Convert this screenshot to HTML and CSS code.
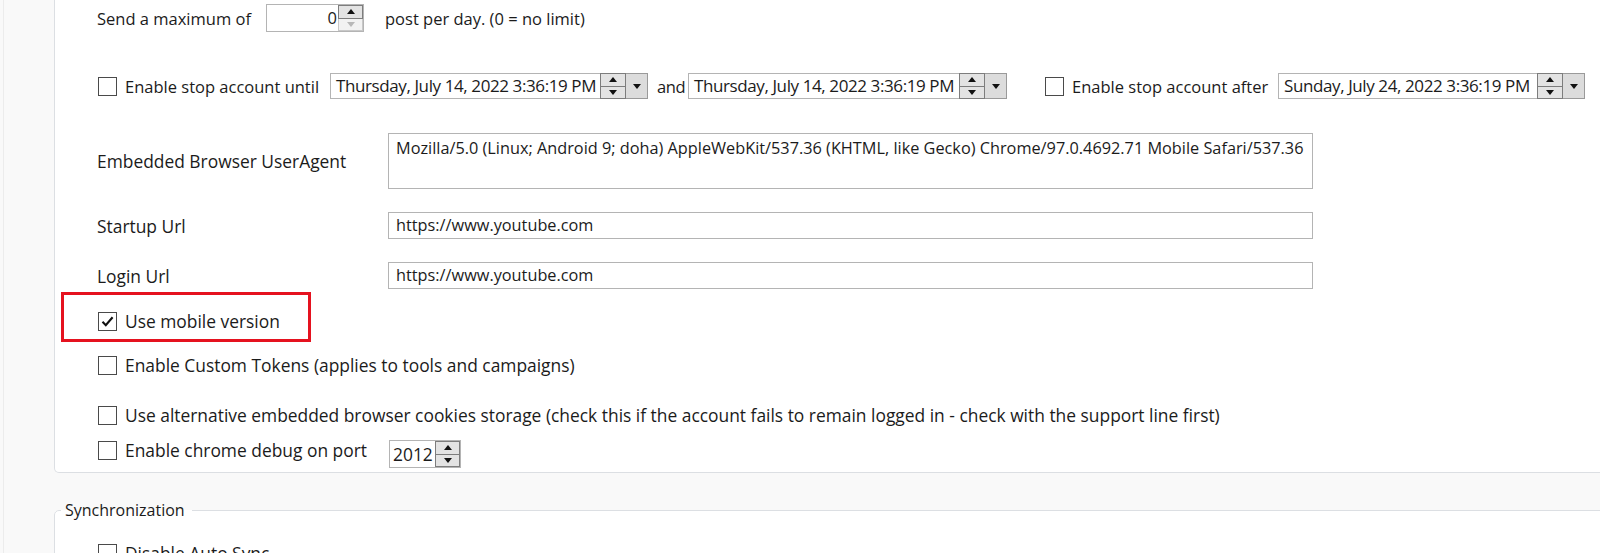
FILE: index.html
```html
<!DOCTYPE html>
<html lang="en">
<head>
    <meta charset="UTF-8">
    <meta name="viewport" content="width=device-width, initial-scale=1.0">
    <title>Account Settings</title>
    <link rel="stylesheet" href="styles.css">
</head>
<body>
    <div class="page">
        <div class="group">
            <div class="row row-max">
                <span class="label-max">Send a maximum of</span>
                <div class="num num-max">
                    <span class="num-value right">0</span>
                    <div class="spin">
                        <span class="spin-btn"><i class="arr-up"></i></span>
                        <span class="spin-btn off"><i class="arr-down"></i></span>
                    </div>
                </div>
                <span class="after-max">post per day. (0 = no limit)</span>
            </div>

            <div class="row row-stop">
                <span class="check"></span>
                <span class="check-text stop-until">Enable stop account until</span>
                <div class="picker picker-a">
                    <span class="picker-text">Thursday, July 14, 2022 3:36:19 PM</span>
                    <div class="spin">
                        <span class="spin-btn"><i class="arr-up"></i></span>
                        <span class="spin-btn"><i class="arr-down"></i></span>
                    </div>
                    <span class="drop"><i class="arr-down"></i></span>
                </div>
                <span class="and">and</span>
                <div class="picker picker-b">
                    <span class="picker-text">Thursday, July 14, 2022 3:36:19 PM</span>
                    <div class="spin">
                        <span class="spin-btn"><i class="arr-up"></i></span>
                        <span class="spin-btn"><i class="arr-down"></i></span>
                    </div>
                    <span class="drop"><i class="arr-down"></i></span>
                </div>
                <span class="check check-after"></span>
                <span class="check-text stop-after">Enable stop account after</span>
                <div class="picker picker-c">
                    <span class="picker-text">Sunday, July 24, 2022 3:36:19 PM</span>
                    <div class="spin">
                        <span class="spin-btn"><i class="arr-up"></i></span>
                        <span class="spin-btn"><i class="arr-down"></i></span>
                    </div>
                    <span class="drop"><i class="arr-down"></i></span>
                </div>
            </div>

            <div class="lower">
                <div class="row row-ua">
                    <span class="field-label">Embedded Browser UserAgent</span>
                    <div class="textbox textarea">Mozilla/5.0 (Linux; Android 9; doha) AppleWebKit/537.36 (KHTML, like Gecko) Chrome/97.0.4692.71 Mobile Safari/537.36</div>
                </div>

                <div class="row row-url">
                    <span class="field-label">Startup Url</span>
                    <div class="textbox">https://www.youtube.com</div>
                </div>

                <div class="row row-url">
                    <span class="field-label">Login Url</span>
                    <div class="textbox">https://www.youtube.com</div>
                </div>

                <div class="highlight">
                    <span class="check checked">
                        <svg width="15" height="15" viewBox="0 0 15 15"><path d="M2.5 7.8 L5.8 11.2 L12.6 3.2" fill="none" stroke="#111" stroke-width="2.1"/></svg>
                    </span>
                    <span class="check-text">Use mobile version</span>
                </div>

                <div class="row row-tokens">
                    <span class="check"></span>
                    <span class="check-text">Enable Custom Tokens (applies to tools and campaigns)</span>
                </div>

                <div class="row row-cookies">
                    <span class="check"></span>
                    <span class="check-text">Use alternative embedded browser cookies storage (check this if the account fails to remain logged in - check with the support line first)</span>
                </div>

                <div class="row row-debug">
                    <span class="check"></span>
                    <span class="check-text debug-text">Enable chrome debug on port</span>
                    <div class="num num-port">
                        <span class="num-value">2012</span>
                        <div class="spin">
                            <span class="spin-btn"><i class="arr-up"></i></span>
                            <span class="spin-btn"><i class="arr-down"></i></span>
                        </div>
                    </div>
                </div>
            </div>
        </div>

        <fieldset class="sync">
            <legend>Synchronization</legend>
            <div class="row sync-row">
                <span class="check"></span>
                <span class="check-text">Disable Auto Sync</span>
            </div>
        </fieldset>
    </div>
</body>
</html>
```

FILE: styles.css
```css
html, body {
    margin: 0;
    height: 100%;
    overflow: hidden;
}
body {
    font-family: "Open Sans", "Noto Sans", sans-serif;
    font-size: 16.5px;
    color: #1b1b1b;
    background-color: #f9f9f9;
}
.page {
    margin-left: 3px;
    padding-left: 50px;
    height: 100%;
    border-left: 1px solid #ececec;
    background-color: #f9f9f9;
}
.group {
    background-color: #fff;
    border: 1px solid #dcdfe3;
    border-top: none;
    border-radius: 0 0 5px 5px;
    margin-right: -20px;
    padding: 0 0 4px 42px;
}
.lower {
    font-size: 17.4px;
}
.row {
    display: flex;
    align-items: center;
    white-space: nowrap;
}
.row-max {
    height: 36px;
}
.label-max {
    width: 169px;
}
.after-max {
    margin-left: 21px;
}
.num {
    display: flex;
    height: 28px;
    box-sizing: border-box;
    border: 1px solid #b4b4b4;
    background: #fff;
}
.num-max {
    width: 98px;
}
.num-port {
    width: 72px;
}
.num-value {
    flex: 1;
    line-height: 26px;
    padding: 0 1px 0 3px;
}
.num-value.right {
    text-align: right;
}
.num .spin {
    width: 25px;
}
.spin {
    display: flex;
    flex-direction: column;
}
.spin-btn {
    flex: 1;
    display: flex;
    align-items: center;
    justify-content: center;
    background: #e3e3e3;
    border: 1px solid #7d7d7d;
}
.spin-btn + .spin-btn {
    border-top: none;
}
.arr-up, .arr-down {
    width: 0;
    height: 0;
    border-left: 4px solid transparent;
    border-right: 4px solid transparent;
}
.arr-up {
    border-bottom: 5px solid #111;
}
.arr-down {
    border-top: 5px solid #111;
}
.spin-btn.off {
    background: #f2f2f2;
    border-color: #c8c8c8;
}
.spin-btn.off .arr-down {
    border-top-color: #b8b8b8;
}
.row-stop {
    height: 26px;
    margin-top: 37px;
}
.check {
    width: 19px;
    height: 19px;
    box-sizing: border-box;
    border: 1px solid #4a4a4a;
    background: #fff;
    margin-left: 1px;
    flex-shrink: 0;
    display: flex;
    align-items: center;
    justify-content: center;
}
.check-text {
    margin-left: 8px;
}
.stop-until {
    width: 205px;
}
.stop-after {
    width: 206px;
}
.check-after {
    margin-left: 38px;
}
.picker {
    display: flex;
    height: 26px;
    font-size: 17px;
    letter-spacing: -0.4px;
}
.picker-a {
    width: 318px;
}
.picker-b {
    width: 319px;
}
.picker-c {
    width: 307px;
}
.picker-text {
    flex: 1;
    border: 1px solid #b4b4b4;
    border-right: none;
    background: #fff;
    line-height: 24px;
    padding-left: 5px;
    overflow: hidden;
}
.picker .spin {
    width: 26px;
}
.drop {
    width: 21px;
    display: flex;
    align-items: center;
    justify-content: center;
    background: #dcdcdc;
    border: 1px solid #9a9a9a;
    border-left: none;
}
.and {
    width: 40px;
    padding-left: 9px;
    box-sizing: border-box;
    letter-spacing: -0.4px;
}
.row-ua {
    margin-top: 34px;
    height: 56px;
}
.field-label {
    width: 291px;
    flex-shrink: 0;
}
.textbox {
    width: 925px;
    height: 27px;
    box-sizing: border-box;
    border: 1px solid #b4b4b4;
    background: #fff;
    padding: 0 7px;
    line-height: 25px;
    font-size: 16.3px;
}
.textarea {
    height: 56px;
    padding-top: 2px;
}
.row-url {
    margin-top: 23px;
    height: 27px;
}
.highlight {
    display: flex;
    align-items: center;
    width: 250px;
    height: 50px;
    box-sizing: border-box;
    margin: 3px 0 0 -36px;
    padding-left: 33px;
    padding-top: 8px;
    border: 3px solid #e5121f;
}
.row-tokens {
    margin-top: 11px;
    height: 24px;
}
.row-cookies {
    margin-top: 26px;
    height: 24px;
}
.row-debug {
    margin-top: 13px;
    height: 28px;
    align-items: flex-start;
}
.row-debug .check {
    margin-top: 1px;
}
.debug-text {
    width: 264px;
    line-height: 20px;
}
.sync {
    margin: 26px -20px 0 0;
    padding: 0;
    border: 1px solid #dcdfe3;
    border-radius: 5px;
    background: #fff;
    min-height: 80px;
}
.sync legend {
    padding: 0 7px 0 4px;
    margin-left: 6px;
    font-size: 16px;
}
.sync-row {
    height: 24px;
    margin: 20px 0 0 42px;
    font-size: 17.4px;
}
```
